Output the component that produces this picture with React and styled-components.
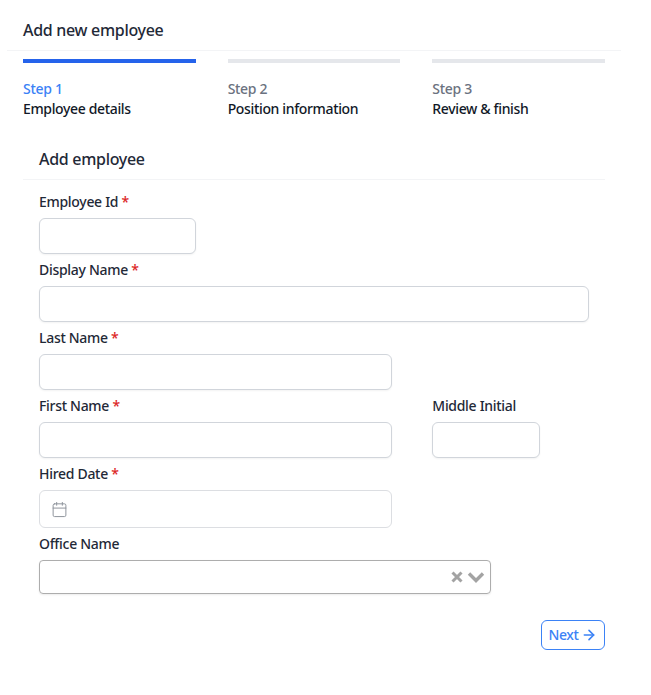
import React from 'react';
import styled, { createGlobalStyle } from 'styled-components';
import { Calendar, ArrowRight } from 'lucide-react';

const Global = createGlobalStyle`
  html, body { margin: 0; padding: 0; background: #fff; }
  body { font-family: "Noto Sans", "Open Sans", sans-serif; letter-spacing: -0.3px; }
  * { box-sizing: border-box; }
`;

const Page = styled.div`
  width: 651px;
  height: 695px;
  padding-left: 7px;
  overflow: hidden;
`;
const Card = styled.div`
  width: 614px;
`;
const Header = styled.header`
  height: 51px;
  padding: 10px 16px 0;
  display: flex;
  align-items: center;
  border-bottom: 1px solid #f3f4f6;
  font-size: 16px;
  font-weight: 500;
  color: #1f2937;
`;
const Body = styled.div`
  padding: 8px 16px 0;
`;
const Steps = styled.ol`
  list-style: none;
  margin: 0;
  padding: 0;
  display: grid;
  grid-template-columns: repeat(3, 1fr);
  gap: 32px;
`;
const Step = styled.li`
  border-top: 4px solid ${(p) => (p.$active ? '#2563eb' : '#e5e7eb')};
  padding-top: 16px;
`;
const StepNo = styled.div`
  font-size: 14px;
  line-height: 20px;
  font-weight: 500;
  color: ${(p) => (p.$active ? '#3b82f6' : '#6b7280')};
`;
const StepName = styled.div`
  font-size: 14px;
  line-height: 20px;
  font-weight: 500;
  letter-spacing: -0.35px;
  color: #111827;
`;
const Section = styled.section`
  margin-top: 20px;
`;
const SectionTitle = styled.h2`
  margin: 0;
  height: 41px;
  padding-left: 16px;
  display: flex;
  align-items: center;
  border-bottom: 1px solid #f3f4f6;
  font-size: 16px;
  font-weight: 500;
  color: #1f2937;
`;
const Form = styled.form`
  padding: 12px 16px 0;
  width: 582px;
  display: grid;
  grid-template-columns: repeat(6, 1fr);
  column-gap: 40px;
`;
const Field = styled.div`
  grid-column: span ${(p) => p.$span};
  display: flex;
  flex-direction: column;
`;
const Label = styled.label`
  height: 20px;
  margin-bottom: 6px;
  font-size: 14px;
  line-height: 20px;
  font-weight: 500;
  color: #1f2937;
`;
const Star = styled.span`
  color: #dc2626;
`;
const Input = styled.input`
  display: block;
  width: ${(p) => p.$width || '100%'};
  height: 36px;
  margin-bottom: 6px;
  border: 1px solid #d1d5db;
  border-radius: 6px;
  background: #fff;
  box-shadow: 0 1px 2px rgba(0, 0, 0, 0.05);
`;
const DateBox = styled.div`
  height: 38px;
  margin-bottom: 6px;
  padding-left: 11px;
  display: flex;
  align-items: center;
  border: 1px solid #dcdee2;
  border-radius: 6px;
  color: #8f949c;
`;
const SelectBox = styled.div`
  width: 452px;
  height: 34px;
  padding-right: 5px;
  display: flex;
  align-items: center;
  justify-content: flex-end;
  gap: 3px;
  border: 1px solid #adadad;
  border-radius: 4px;
  box-shadow: 0 1px 2px rgba(0, 0, 0, 0.08);
  color: #a3a3a3;
`;
const Footer = styled.div`
  margin-top: 26px;
  display: flex;
  justify-content: flex-end;
`;
const NextButton = styled.button`
  width: 64px;
  height: 30px;
  padding: 0 0 2px;
  display: flex;
  align-items: center;
  justify-content: center;
  gap: 3px;
  background: #fff;
  border: 1px solid #3b82f6;
  border-radius: 6px;
  color: #3b82f6;
  font-family: inherit;
  letter-spacing: -0.4px;
  font-size: 14px;
  font-weight: 500;
  svg { margin-top: 2px; }
`;

const Req = () => <Star>*</Star>;

export default function App() {
  return (
    <Page>
      <Global />
      <Card>
        <Header>Add new employee</Header>
        <Body>
          <Steps>
            <Step $active>
              <StepNo $active>Step 1</StepNo>
              <StepName>Employee details</StepName>
            </Step>
            <Step>
              <StepNo>Step 2</StepNo>
              <StepName>Position information</StepName>
            </Step>
            <Step>
              <StepNo>Step 3</StepNo>
              <StepName>Review &amp; finish</StepName>
            </Step>
          </Steps>
          <Section>
            <SectionTitle>Add employee</SectionTitle>
            <Form>
              <Field $span={2}>
                <Label>Employee Id <Req /></Label>
                <Input />
              </Field>
              <Field $span={4} />
              <Field $span={6}>
                <Label>Display Name <Req /></Label>
                <Input />
              </Field>
              <Field $span={4}>
                <Label>Last Name <Req /></Label>
                <Input />
              </Field>
              <Field $span={2} />
              <Field $span={4}>
                <Label>First Name <Req /></Label>
                <Input />
              </Field>
              <Field $span={2}>
                <Label>Middle Initial</Label>
                <Input $width="108px" />
              </Field>
              <Field $span={4}>
                <Label>Hired Date <Req /></Label>
                <DateBox><Calendar size={17} strokeWidth={1.4} /></DateBox>
              </Field>
              <Field $span={2} />
              <Field $span={6}>
                <Label>Office Name</Label>
                <SelectBox>
                  <svg width="14" height="14" viewBox="0 0 14 14" fill="none" stroke="currentColor" strokeWidth="3">
                    <path d="M2.5 2.5 11.5 11.5M11.5 2.5 2.5 11.5" />
                  </svg>
                  <svg width="18" height="14" viewBox="0 0 18 14" fill="none" stroke="currentColor" strokeWidth="3.4">
                    <path d="M2 3.5 9 10.5 16 3.5" />
                  </svg>
                </SelectBox>
              </Field>
            </Form>
            <Footer>
              <NextButton type="button">Next <ArrowRight size={16} strokeWidth={2.4} /></NextButton>
            </Footer>
          </Section>
        </Body>
      </Card>
    </Page>
  );
}
